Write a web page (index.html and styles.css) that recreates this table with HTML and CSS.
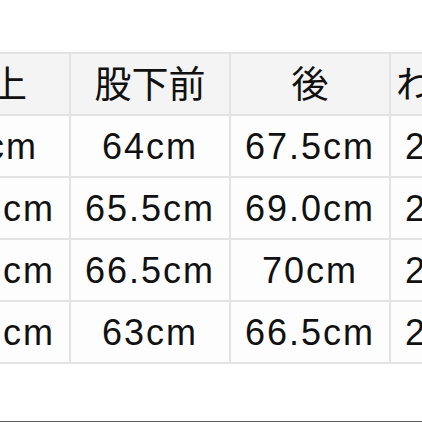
FILE: index.html
```html
<!DOCTYPE html>
<html lang="ja">
<head>
<meta charset="utf-8">
<link rel="stylesheet" href="styles.css">
</head>
<body>
<div class="page">
  <div class="size-table">
    <div class="cell head">股上</div>
    <div class="cell head">股下前</div>
    <div class="cell head">後</div>
    <div class="cell head">わたり幅</div>

    <div class="cell">29cm</div>
    <div class="cell">64cm</div>
    <div class="cell">67.5cm</div>
    <div class="cell">28.5cm</div>

    <div class="cell">30.5cm</div>
    <div class="cell">65.5cm</div>
    <div class="cell">69.0cm</div>
    <div class="cell">29.0cm</div>

    <div class="cell">31.5cm</div>
    <div class="cell">66.5cm</div>
    <div class="cell">70cm</div>
    <div class="cell">29.5cm</div>

    <div class="cell">29.5cm</div>
    <div class="cell">63cm</div>
    <div class="cell">66.5cm</div>
    <div class="cell">28.5cm</div>
  </div>
</div>
</body>
</html>
```

FILE: styles.css
```css
html, body {
  margin: 0;
  padding: 0;
  background: #ffffff;
}

.page {
  width: 422px;
  height: 422px;
  box-sizing: border-box;
  overflow: hidden;
  padding-top: 52px;
  border-bottom: 1px solid #5c5c5c;
  font-family: "Liberation Sans", "Noto Sans CJK JP", sans-serif;
  color: #111111;
}

.size-table {
  display: grid;
  grid-template-columns: repeat(4, 158px);
  grid-auto-rows: 60px;
  gap: 2px;
  padding: 2px;
  background: #e3e3e3;
  width: max-content;
  margin-left: -91px;
}

.cell {
  display: flex;
  align-items: center;
  justify-content: center;
  background: #fdfdfd;
  font-size: 36px;
  letter-spacing: 2px;
  padding-top: 2px;
  box-sizing: border-box;
  white-space: nowrap;
}

.head {
  background: #f4f4f4;
  font-family: "Noto Sans CJK JP", sans-serif;
  font-size: 37px;
  letter-spacing: 0;
  padding-top: 0;
  padding-bottom: 5px;
}
```
